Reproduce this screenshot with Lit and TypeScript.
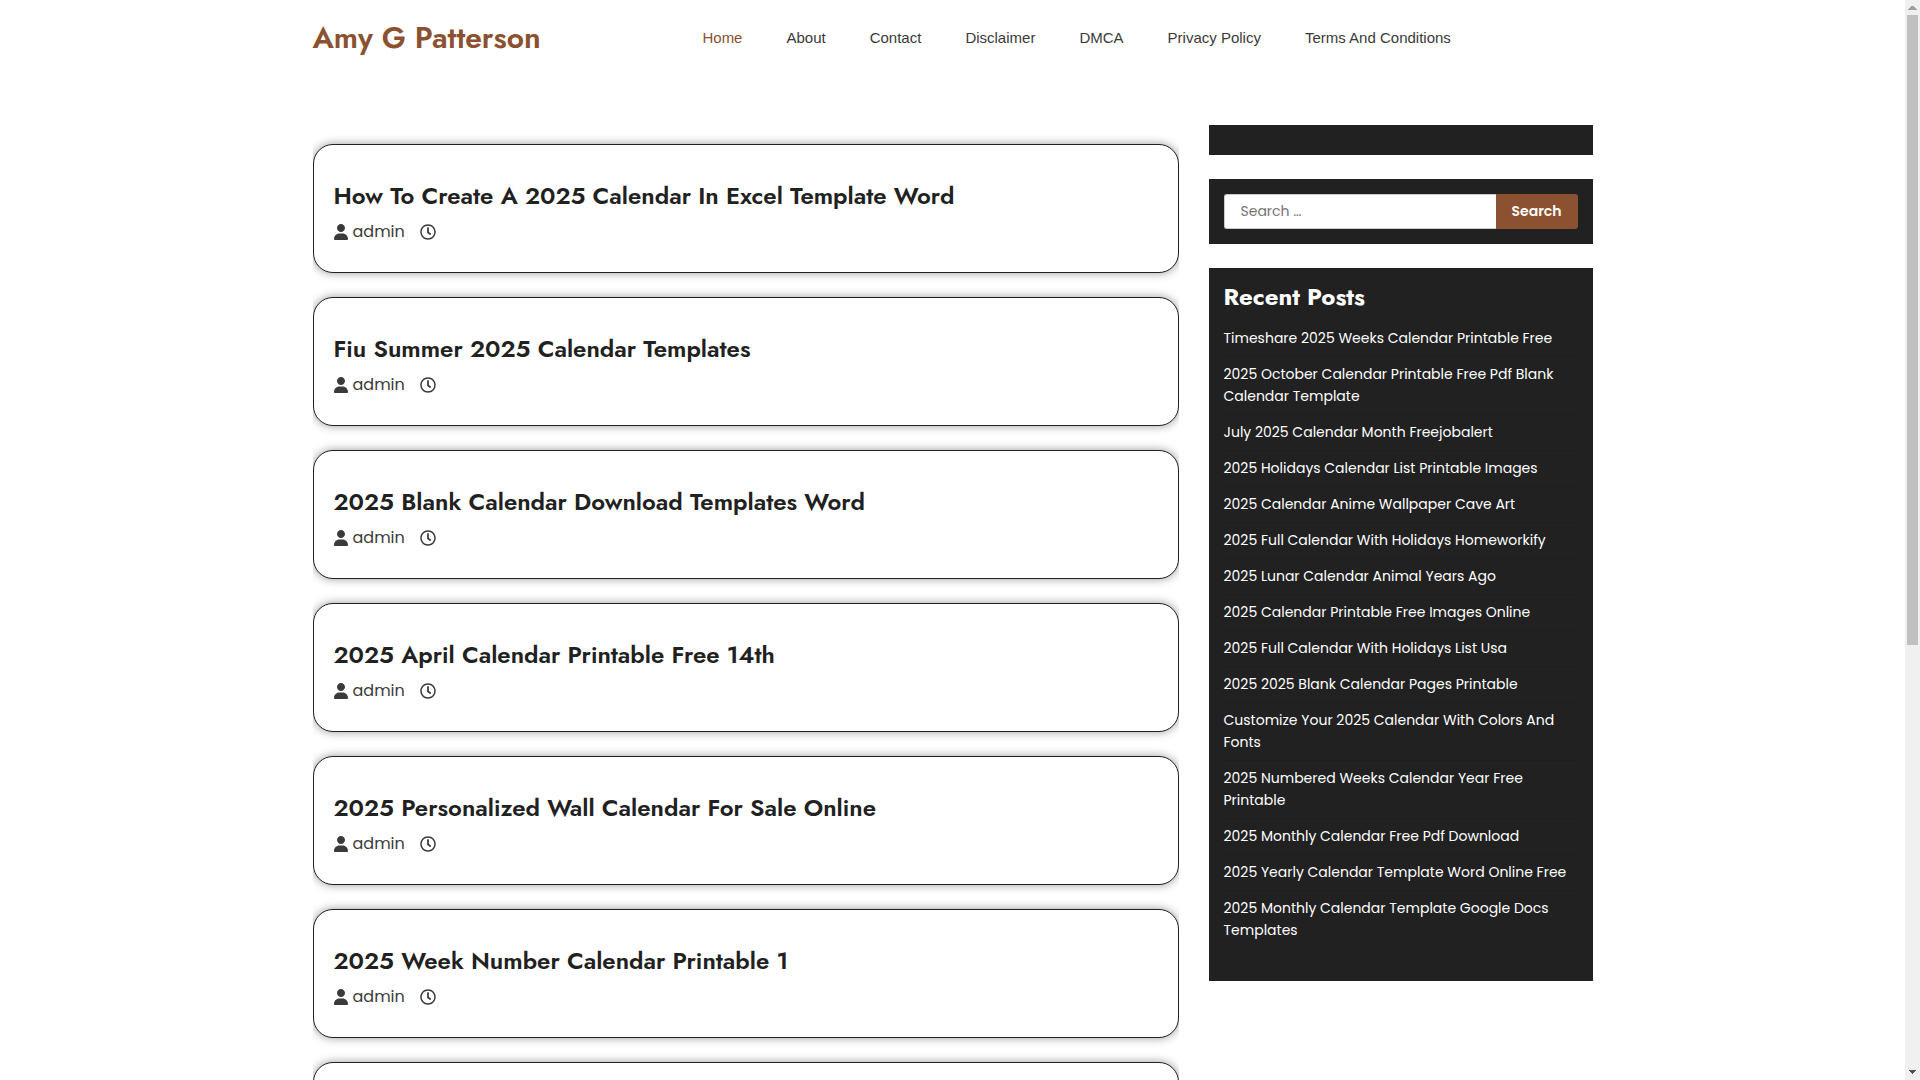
import { LitElement, html, css, svg, nothing } from "lit";
import { customElement, property } from "lit/decorators.js";
import { classMap } from "lit/directives/class-map.js";

const NAV = ["Home", "About", "Contact", "Disclaimer", "DMCA", "Privacy Policy", "Terms And Conditions"];

const POSTS = [
  "How To Create A 2025 Calendar In Excel Template Word",
  "Fiu Summer 2025 Calendar Templates",
  "2025 Blank Calendar Download Templates Word",
  "2025 April Calendar Printable Free 14th",
  "2025 Personalized Wall Calendar For Sale Online",
  "2025 Week Number Calendar Printable 1",
  "",
];

const RECENT = [
  "Timeshare 2025 Weeks Calendar Printable Free",
  "2025 October Calendar Printable Free Pdf Blank Calendar Template",
  "July 2025 Calendar Month Freejobalert",
  "2025 Holidays Calendar List Printable Images",
  "2025 Calendar Anime Wallpaper Cave Art",
  "2025 Full Calendar With Holidays Homeworkify",
  "2025 Lunar Calendar Animal Years Ago",
  "2025 Calendar Printable Free Images Online",
  "2025 Full Calendar With Holidays List Usa",
  "2025 2025 Blank Calendar Pages Printable",
  "Customize Your 2025 Calendar With Colors And Fonts",
  "2025 Numbered Weeks Calendar Year Free Printable",
  "2025 Monthly Calendar Free Pdf Download",
  "2025 Yearly Calendar Template Word Online Free",
  "2025 Monthly Calendar Template Google Docs Templates",
];

const userIcon = svg`<path d="M224 256c70.700 0 128-57.310 128-128s-57.300-128-128-128C153.300 0 96 57.310 96 128S153.300 256 224 256zM274.700 304H173.300C77.610 304 0 381.600 0 477.300c0 19.140 15.520 34.670 34.660 34.670h378.700C432.500 512 448 496.500 448 477.300C448 381.600 370.400 304 274.700 304z"/>`;

const clockIcon = svg`<path d="M256 8C119 8 8 119 8 256s111 248 248 248 248-111 248-248S393 8 256 8zm0 448c-110.500 0-200-89.500-200-200S145.500 56 256 56s200 89.500 200 200-89.500 200-200 200zm61.800-104.400l-84.900-61.700c-3.100-2.300-4.900-5.900-4.900-9.700V116c0-6.600 5.400-12 12-12h32c6.600 0 12 5.400 12 12v141.700l66.800 48.600c5.400 3.900 6.500 11.400 2.600 16.800L334.600 349c-3.900 5.300-11.400 6.500-16.800 2.600z"/>`;

@customElement("post-card")
class PostCard extends LitElement {
  @property() heading = "";

  static styles = css`
    :host {
      display: block;
    }
    .card {
      box-sizing: border-box;
      min-height: 129px;
      padding: 34px 20px 27px;
      border: 1px solid #212121;
      border-radius: 20px;
      background: #fff;
      box-shadow: 0 0 10px rgba(0, 0, 0, 0.4);
    }
    .title {
      margin: 0 0 7px;
      font: 600 24px/34px Jost, "Liberation Sans", sans-serif;
    }
    .meta {
      display: flex;
      align-items: center;
      gap: 15px;
      font: 16px/24px Poppins, "Liberation Sans", sans-serif;
      color: #3a3a3a;
    }
    .author {
      display: flex;
      align-items: center;
      gap: 5px;
    }
    a {
      color: inherit;
      text-decoration: none;
    }
    .title a {
      color: #212121;
    }
    svg {
      display: block;
      height: 16px;
      fill: #3a3a3a;
    }
    .user {
      width: 14px;
    }
    .clock {
      width: 16px;
    }
  `;

  render() {
    return html`<article class="card">
      ${this.heading
        ? html`<h2 class="title"><a href="#">${this.heading}</a></h2>
            <div class="meta">
              <span class="author">
                <svg class="user" viewBox="0 0 448 512" aria-hidden="true">${userIcon}</svg>
                <a href="#">admin</a>
              </span>
              <svg class="clock" viewBox="0 0 512 512" aria-hidden="true">${clockIcon}</svg>
            </div>`
        : nothing}
    </article>`;
  }
}

@customElement("app-root")
class AppRoot extends LitElement {
  static styles = css`
    :host {
      display: flex;
      height: 100vh;
      overflow: hidden;
      background: #fff;
      color: #3a3a3a;
      font: 14px/22px Poppins, "Liberation Sans", sans-serif;
    }
    a {
      color: inherit;
      text-decoration: none;
    }
    .page {
      flex: 1;
      min-width: 0;
      overflow: hidden;
    }
    .container {
      max-width: 1280px;
      margin: 0 auto;
    }
    .header {
      display: flex;
      align-items: center;
      gap: 20px;
      padding: 16px 0 65px;
    }
    .brand {
      margin: 0;
      font: 600 30px/44px Jost, "Liberation Sans", sans-serif;
      color: #8b5130;
    }
    .nav {
      flex: 1;
      display: flex;
      justify-content: center;
      gap: 44px;
      font: 15px/22px "Liberation Sans", Arial, sans-serif;
    }
    .current {
      color: #8b5130;
    }
    .layout {
      display: grid;
      grid-template-columns: minmax(0, 1fr) 30%;
      gap: 30px;
      align-items: start;
    }
    .posts {
      display: flex;
      flex-direction: column;
      gap: 24px;
      padding: 19px 0;
      overflow: hidden;
    }
    .sidebar {
      display: flex;
      flex-direction: column;
      gap: 24px;
    }
    .widget {
      padding: 15px;
      background: #212121;
      color: #fff;
    }
    .search {
      display: flex;
      height: 35px;
    }
    .search input {
      flex: 1;
      min-width: 0;
      box-sizing: border-box;
      padding: 0 16px 2px;
      border: 1px solid #ccc;
      border-right: 0;
      border-radius: 3px 0 0 3px;
      background: #fff;
      font: inherit;
      outline: none;
    }
    .search input::placeholder {
      color: #757575;
      opacity: 1;
    }
    .search button {
      padding: 0 16px 2px;
      border: 0;
      border-radius: 0 3px 3px 0;
      background: #8b5130;
      color: #fff;
      font: inherit;
      font-weight: 600;
    }
    .heading {
      margin: 0 0 11px;
      font: 700 24px/27px Jost, "Liberation Sans", sans-serif;
    }
    .recent {
      margin: 0 0 17px;
      padding: 0;
      list-style: none;
    }
    .recent li {
      padding: 6px 0 7px;
      border-bottom: 1px solid #1e1e1e;
    }
    .recent li:last-child {
      border-bottom-color: transparent;
    }
    .scrollbar {
      display: flex;
      flex-direction: column;
      align-items: center;
      width: 15px;
      background: #f0f0f0;
    }
    .scrollbar svg {
      display: block;
      width: 15px;
      height: 15px;
    }
    .track {
      flex: 1;
      width: 11px;
    }
    .thumb {
      height: 60%;
      background: #c0c0c0;
    }
  `;

  render() {
    return html`
      <div class="page">
        <header class="container header">
          <h1 class="brand"><a href="#">Amy G Patterson</a></h1>
          <nav class="nav">
            ${NAV.map((label, i) => html`<a href="#" class=${classMap({ current: i === 0 })}>${label}</a>`)}
          </nav>
        </header>
        <div class="container layout">
          <main class="posts">${POSTS.map((p) => html`<post-card .heading=${p}></post-card>`)}</main>
          <aside class="sidebar">
            <div class="widget"></div>
            <div class="widget">
              <form class="search" role="search">
                <input type="search" placeholder="Search …" aria-label="Search" />
                <button type="button">Search</button>
              </form>
            </div>
            <section class="widget">
              <h2 class="heading">Recent Posts</h2>
              <ul class="recent">
                ${RECENT.map((r) => html`<li><a href="#">${r}</a></li>`)}
              </ul>
            </section>
          </aside>
        </div>
      </div>
      <div class="scrollbar" aria-hidden="true">
        <svg viewBox="0 0 15 15"><path d="M3 10h9v-1h-1v-1h-1v-1h-1v-1h-3v1h-1v1h-1v1h-1z" fill="#a0a0a0" /></svg>
        <div class="track"><div class="thumb"></div></div>
        <svg viewBox="0 0 15 15"><path d="M4 5h7v1h-1v1h-1v1h-1v1h-1v-1h-1v-1h-1v-1h-1z" fill="#505050" /></svg>
      </div>
    `;
  }
}
